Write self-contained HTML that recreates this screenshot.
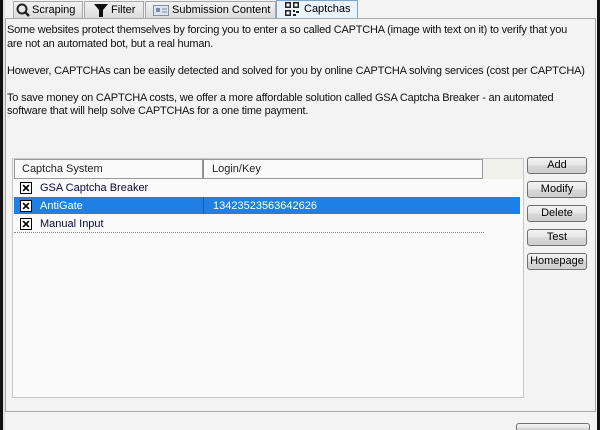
<!DOCTYPE html>
<html><head><style>
*{margin:0;padding:0;box-sizing:border-box}
html,body{width:600px;height:430px;overflow:hidden}
body{background:#f3f3f3;font-family:"Liberation Sans",sans-serif;font-size:11px;color:#000;position:relative}
.abs{position:absolute}
.tab{position:absolute;top:1px;height:17px;border:1px solid #a8a8a8;border-bottom:none;background:linear-gradient(#f2f2f2,#dcdcdc);font-size:11px;line-height:16px;padding-left:18px;white-space:nowrap}
.btn{position:absolute;left:527px;width:60px;height:17px;border:1px solid #707070;border-radius:3px;background:linear-gradient(#f4f4f4 0%,#e6e6e6 45%,#d6d6d6 55%,#cfcfcf 100%);text-align:center;font-size:11px;line-height:15px}
.row{position:absolute;left:14px;width:470px;height:18px;line-height:18px;font-size:11px;color:#0a0a3a}
.cb{position:absolute;left:6px;top:3px;width:12px;height:12px;border:1px solid #000;background:#fff}
</style></head><body>
<div class="abs" style="left:0;top:0;width:3px;height:430px;background:#111"></div>
<div class="abs" style="left:597px;top:0;width:3px;height:430px;background:#111"></div>
<div class="abs" style="left:3px;top:0;width:2px;height:430px;background:#e0e0e0"></div>
<div class="tab" style="left:13px;width:70px">Scraping
<svg class="abs" style="left:2px;top:1px" width="15" height="15"><circle cx="6" cy="6" r="4.5" fill="none" stroke="#222" stroke-width="2"/><line x1="9" y1="9" x2="13" y2="13" stroke="#222" stroke-width="2.5"/></svg></div>
<div class="tab" style="left:84px;width:60px;padding-left:26px">Filter
<svg class="abs" style="left:8px;top:1px" width="16" height="15"><path d="M1 1h14l-5 6v7h-4v-7z" fill="#111"/></svg></div>
<div class="tab" style="left:145px;width:131px;padding-left:26px">Submission Content
<svg class="abs" style="left:7px;top:3px" width="16" height="11"><rect x="0.5" y="0.5" width="15" height="10" fill="#dde4ee" stroke="#8090a8"/><rect x="3" y="3" width="4" height="4" fill="#7a8aa8"/><line x1="9" y1="4" x2="14" y2="4" stroke="#7a8aa8"/><line x1="9" y1="7" x2="14" y2="7" stroke="#7a8aa8"/></svg></div>
<div class="tab" style="left:276px;width:82px;top:0;height:18px;background:#eaf2fb;border-color:#7da2ce;padding-left:27px">Captchas
<svg class="abs" style="left:8px;top:1px" width="15" height="15"><rect x="0" y="0" width="6" height="6" fill="#222"/><rect x="1.5" y="1.5" width="3" height="3" fill="#fff"/><rect x="8" y="0" width="6" height="6" fill="#222"/><rect x="9.5" y="1.5" width="3" height="3" fill="#fff"/><rect x="0" y="8" width="6" height="6" fill="#222"/><rect x="1.5" y="9.5" width="3" height="3" fill="#fff"/><rect x="8" y="8" width="2" height="2" fill="#222"/><rect x="11" y="9" width="3" height="2" fill="#222"/><rect x="8" y="12" width="3" height="2" fill="#222"/></svg></div>
<div class="abs" style="left:5px;top:18px;width:591px;height:394px;border:1px solid #a8a8a8;background:#f3f3f3"></div>
<div class="abs" style="left:7px;top:24px;width:588px;font-size:11px;letter-spacing:-0.2px;line-height:13.5px;color:#111;white-space:nowrap">
Some websites protect themselves by forcing you to enter a so called CAPTCHA (image with text on it) to verify that you<br>are not an automated bot, but a real human.<br><br>
However, CAPTCHAs can be easily detected and solved for you by online CAPTCHA solving services (cost per CAPTCHA)<br><br>
To save money on CAPTCHA costs, we offer a more affordable solution called GSA Captcha Breaker - an automated<br>software that will help solve CAPTCHAs for a one time payment.</div>
<div class="abs" style="left:12px;top:158px;width:512px;height:240px;border:1px solid #c8c8c8;background:#fafafa"></div>
<div class="abs" style="left:13px;top:159px;width:510px;height:20px;background:#f1f1ec"></div>
<div class="abs" style="left:14px;top:159px;width:189px;height:20px;border:1px solid #999;background:#fafafa;padding-left:7px;line-height:18px;color:#222">Captcha System</div>
<div class="abs" style="left:203px;top:159px;width:280px;height:20px;border:1px solid #999;border-left:1px solid #888;background:#fafafa;padding-left:8px;line-height:18px;color:#222">Login/Key</div>
<div class="row" style="top:179px"><svg class="cb" viewBox="0 0 12 12"><path d="M2.5 2.5L9.5 9.5M9.5 2.5L2.5 9.5" stroke="#000" stroke-width="2"/></svg><span style="position:absolute;left:26px">GSA Captcha Breaker</span></div>
<div class="abs" style="left:14px;top:197px;width:506px;height:17px;background:#1e80e6"></div>
<div class="abs" style="left:203px;top:197px;width:1px;height:17px;background:#1060b8"></div>
<div class="row" style="top:197px;color:#fff"><svg class="cb" viewBox="0 0 12 12"><path d="M2.5 2.5L9.5 9.5M9.5 2.5L2.5 9.5" stroke="#000" stroke-width="2"/></svg><span style="position:absolute;left:26px">AntiGate</span><span style="position:absolute;left:199px">13423523563642626</span></div>
<div class="row" style="top:215px"><svg class="cb" viewBox="0 0 12 12"><path d="M2.5 2.5L9.5 9.5M9.5 2.5L2.5 9.5" stroke="#000" stroke-width="2"/></svg><span style="position:absolute;left:26px">Manual Input</span></div>
<div class="abs" style="left:14px;top:232px;width:470px;border-top:1px dotted #888"></div>
<div class="btn" style="top:157px">Add</div>
<div class="btn" style="top:181px">Modify</div>
<div class="btn" style="top:205px">Delete</div>
<div class="btn" style="top:229px">Test</div>
<div class="btn" style="top:253px">Homepage</div>
<div class="btn" style="left:516px;top:423px;width:74px;height:10px"></div>
</body></html>
